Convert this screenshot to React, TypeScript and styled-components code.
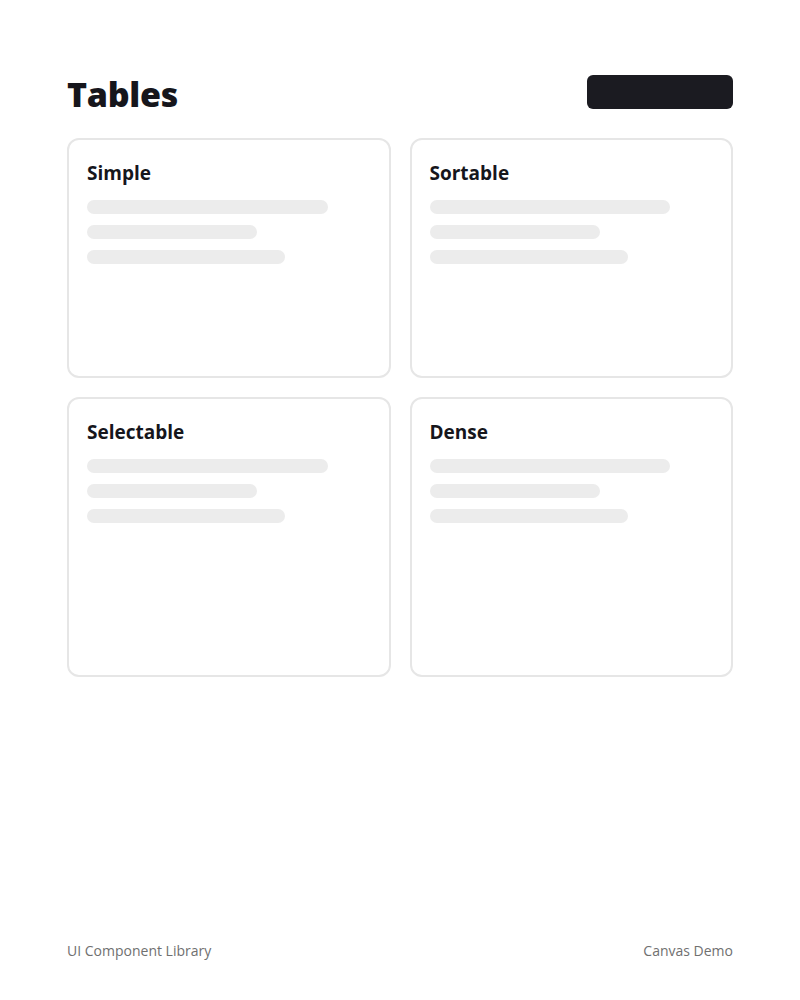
import React from 'react';
import styled, {createGlobalStyle} from 'styled-components';

const GlobalStyle = createGlobalStyle`
  html, body {
    margin: 0;
    padding: 0;
    background: #ffffff;
  }
  body {
    font-family: "Open Sans", "Noto Sans", "Liberation Sans", sans-serif;
    color: #16161c;
  }
  * {
    box-sizing: border-box;
  }
`;

const Page = styled.div`
  min-height: 100vh;
  display: flex;
  flex-direction: column;
  padding: 70px 67px 39px;
`;

const Header = styled.header`
  display: flex;
  justify-content: space-between;
  align-items: center;
`;

const Title = styled.h1`
  margin: 0;
  padding-top: 4px;
  font-size: 34px;
  line-height: 40px;
  font-weight: 800;
  letter-spacing: -0.3px;
  color: #16161c;
`;

const ActionButton = styled.button`
  width: 146px;
  height: 34px;
  border: none;
  border-radius: 6px;
  background: #1b1b21;
  cursor: pointer;
`;

const Grid = styled.div`
  display: grid;
  grid-template-columns: 1fr 1fr;
  grid-template-rows: 240px 280px;
  gap: 19px;
  margin-top: 24px;
`;

const Card = styled.section`
  border: 2px solid #e6e6e6;
  border-radius: 12px;
  padding: 18px;
  background: #ffffff;
`;

const CardTitle = styled.h2`
  margin: 0 0 12px;
  font-size: 19px;
  line-height: 30px;
  font-weight: 700;
  color: #16161c;
`;

const Lines = styled.div`
  display: flex;
  flex-direction: column;
  gap: 11px;
`;

const Line = styled.div<{$w: number}>`
  width: ${(p) => p.$w}%;
  height: 14px;
  border-radius: 7px;
  background: #ececec;
`;

const Footer = styled.footer`
  margin-top: auto;
  display: flex;
  justify-content: space-between;
  font-size: 14px;
  line-height: 20px;
  color: #707070;
`;

const cards = ['Simple', 'Sortable', 'Selectable', 'Dense'];

export default function App() {
  return (
    <>
      <GlobalStyle />
      <Page>
        <Header>
          <Title>Tables</Title>
          <ActionButton aria-label="action" />
        </Header>
        <Grid>
          {cards.map((name) => (
            <Card key={name}>
              <CardTitle>{name}</CardTitle>
              <Lines>
                <Line $w={85} />
                <Line $w={60} />
                <Line $w={70} />
              </Lines>
            </Card>
          ))}
        </Grid>
        <Footer>
          <span>UI Component Library</span>
          <span>Canvas Demo</span>
        </Footer>
      </Page>
    </>
  );
}
